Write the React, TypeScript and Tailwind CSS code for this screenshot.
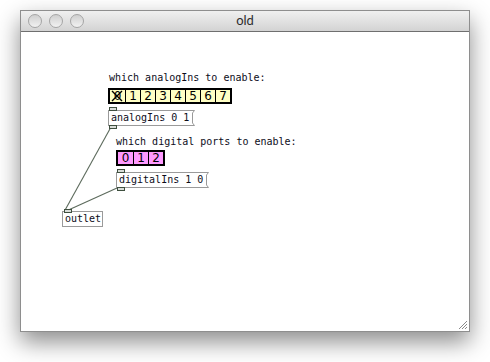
import type { ReactNode } from "react";

const mono = "font-['DejaVu_Sans_Mono',monospace] text-[10px] leading-[12px] text-[#0d0d1a]";

function Port({ className }: { className: string }) {
  return (
    <div className={`absolute h-[4px] w-[8px] border border-[#3f4f3f] bg-[#d8dcd8] ${className}`} />
  );
}

function MessageBox({ children }: { children: ReactNode }) {
  return (
    <div className="relative flex h-[16px]">
      <div className={`flex items-center border-y border-l border-[#9a9a9a] bg-white pl-[2px] pr-[1px] ${mono}`}>
        {children}
      </div>
      <svg width="5" height="16" className="block">
        <path d="M0 0.5 H4.5 L2.5 3 V13 L4.5 15.5 H0" fill="white" stroke="#9a9a9a" strokeWidth="1" />
      </svg>
      <Port className="-top-[3px] left-[1px]" />
      <Port className="-bottom-[3px] left-[1px]" />
    </div>
  );
}

function Toggles({ items, bg, crossed }: { items: string[]; bg: string; crossed?: boolean }) {
  return (
    <div className={`flex h-[16px] border-2 border-black ${bg}`}>
      {items.map((n, i) => (
        <div
          key={n}
          className={`relative flex w-[15px] items-center justify-center font-['DejaVu_Sans',sans-serif] text-[12px] leading-none text-black ${
            i > 0 ? "border-l border-black" : ""
          }`}
        >
          {n}
          {i === 0 && crossed && (
            <svg className="absolute inset-0" width="15" height="12" viewBox="0 0 15 12">
              <path d="M2 1 L12 11 M12 1 L2 11" stroke="black" strokeWidth="1.4" />
            </svg>
          )}
        </div>
      ))}
    </div>
  );
}

export default function App() {
  return (
    <div className="h-[362px] w-[490px] overflow-hidden bg-white pl-[20px] pt-[10px]">
      <div className="flex h-[322px] w-[450px] flex-col border border-[#8e8e8e] bg-white shadow-[0_10px_22px_rgba(0,0,0,0.45)]">
        <div className="flex h-[21px] shrink-0 items-center border-b border-[#6f6f6f] bg-gradient-to-b from-[#f0f0f0] to-[#d3d3d3] px-[7px]">
          <div className="flex gap-[7px]">
            {[0, 1, 2].map((i) => (
              <div
                key={i}
                className="h-[14px] w-[14px] rounded-full border border-[#a5a5a5] bg-gradient-to-b from-[#cfcfcf] to-[#f2f2f2]"
              />
            ))}
          </div>
          <div className="flex-1 pr-[56px] text-center font-['Lato',sans-serif] text-[13px] text-[#2d2d2d]">old</div>
        </div>
        <div className="relative flex-1">
          <svg className="absolute inset-0" width="448" height="299">
            <line x1="90" y1="95" x2="43" y2="180" stroke="#5c6a5c" strokeWidth="1.1" />
            <line x1="96" y1="156" x2="43" y2="180" stroke="#5c6a5c" strokeWidth="1.1" />
          </svg>

          <div className="absolute left-[87px] top-[40px] flex flex-col items-start">
            <div className={`pl-[1px] ${mono}`}>which analogIns to enable:</div>
            <div className="mt-[4px]">
              <Toggles items={["0", "1", "2", "3", "4", "5", "6", "7"]} bg="bg-[#ffffc4]" crossed />
            </div>
            <div className="mt-[6px]">
              <MessageBox>analogIns 0 1</MessageBox>
            </div>
          </div>

          <div className="absolute left-[95px] top-[104px] flex flex-col items-start">
            <div className={mono}>which digital ports to enable:</div>
            <div className="mt-[2px]">
              <Toggles items={["0", "1", "2"]} bg="bg-[#ff99ff]" />
            </div>
            <div className="mt-[6px]">
              <MessageBox>digitalIns 1 0</MessageBox>
            </div>
          </div>

          <div className={`absolute left-[41px] top-[179px] flex h-[16px] w-[41px] items-center border border-[#9a9a9a] bg-white pl-[2px] ${mono}`}>
            outlet
            <Port className="-top-[3px] left-[1px]" />
          </div>

          <svg className="absolute bottom-[1px] right-[1px]" width="11" height="11" viewBox="0 0 11 11">
            <path d="M10 2 L2 10 M10 5 L5 10 M10 8 L8 10" stroke="#8a8a8a" strokeWidth="1" />
          </svg>
        </div>
      </div>
    </div>
  );
}
